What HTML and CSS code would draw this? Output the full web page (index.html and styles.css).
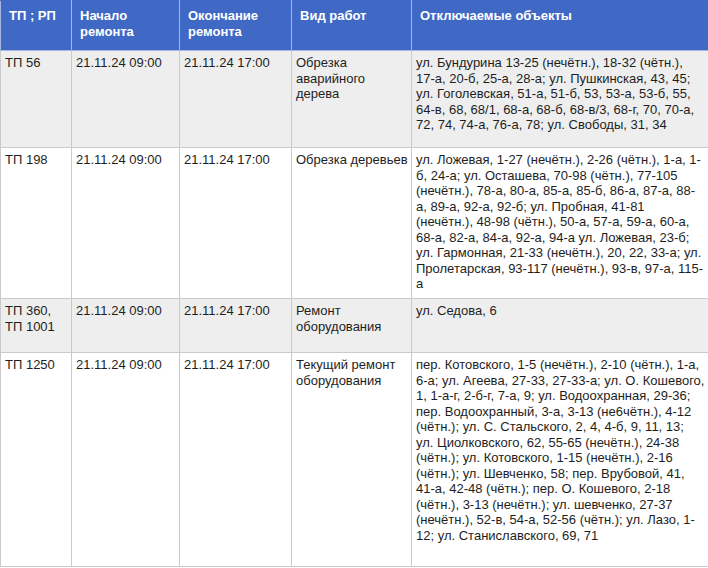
FILE: index.html
```html
<!DOCTYPE html>
<html lang="ru">
<head>
<meta charset="utf-8">
<title>Отключения</title>
<link rel="stylesheet" href="styles.css">
</head>
<body>
<table class="grid">
  <colgroup>
    <col class="c1"><col class="c2"><col class="c3"><col class="c4"><col class="c5">
  </colgroup>
  <thead>
    <tr class="head">
      <th>ТП ; РП</th>
      <th>Начало<br>ремонта</th>
      <th>Окончание<br>ремонта</th>
      <th>Вид работ</th>
      <th>Отключаемые объекты</th>
    </tr>
  </thead>
  <tbody>
    <tr class="r1 alt">
      <td>ТП 56</td>
      <td>21.11.24 09:00</td>
      <td>21.11.24 17:00</td>
      <td>Обрезка<br>аварийного<br>дерева</td>
      <td>ул. Бундурина 13-25 (нечётн.), 18-32 (чётн.),<br>17-а, 20-б, 25-а, 28-а; ул. Пушкинская, 43, 45;<br>ул. Гоголевская, 51-а, 51-б, 53, 53-а, 53-б, 55,<br>64-в, 68, 68/1, 68-а, 68-б, 68-в/3, 68-г, 70, 70-а,<br>72, 74, 74-а, 76-а, 78; ул. Свободы, 31, 34</td>
    </tr>
    <tr class="r2">
      <td>ТП 198</td>
      <td>21.11.24 09:00</td>
      <td>21.11.24 17:00</td>
      <td>Обрезка деревьев</td>
      <td>ул. Ложевая, 1-27 (нечётн.), 2-26 (чётн.), 1-а, 1-<br>б, 24-а; ул. Осташева, 70-98 (чётн.), 77-105<br>(нечётн.), 78-а, 80-а, 85-а, 85-б, 86-а, 87-а, 88-<br>а, 89-а, 92-а, 92-б; ул. Пробная, 41-81<br>(нечётн.), 48-98 (чётн.), 50-а, 57-а, 59-а, 60-а,<br>68-а, 82-а, 84-а, 92-а, 94-а ул. Ложевая, 23-б;<br>ул. Гармонная, 21-33 (нечётн.), 20, 22, 33-а; ул.<br>Пролетарская, 93-117 (нечётн.), 93-в, 97-а, 115-<br>а</td>
    </tr>
    <tr class="r3 alt">
      <td>ТП 360,<br>ТП 1001</td>
      <td>21.11.24 09:00</td>
      <td>21.11.24 17:00</td>
      <td>Ремонт<br>оборудования</td>
      <td>ул. Седова, 6</td>
    </tr>
    <tr class="r4">
      <td>ТП 1250</td>
      <td>21.11.24 09:00</td>
      <td>21.11.24 17:00</td>
      <td>Текущий ремонт<br>оборудования</td>
      <td>пер. Котовского, 1-5 (нечётн.), 2-10 (чётн.), 1-а,<br>6-а; ул. Агеева, 27-33, 27-33-а; ул. О. Кошевого,<br>1, 1-а-г, 2-б-г, 7-а, 9; ул. Водоохранная, 29-36;<br>пер. Водоохранный, 3-а, 3-13 (не6чётн.), 4-12<br>(чётн.); ул. С. Стальского, 2, 4, 4-б, 9, 11, 13;<br>ул. Циолковского, 62, 55-65 (нечётн.), 24-38<br>(чётн.); ул. Котовского, 1-15 (нечётн.), 2-16<br>(чётн.); ул. Шевченко, 58; пер. Врубовой, 41,<br>41-а, 42-48 (чётн.); пер. О. Кошевого, 2-18<br>(чётн.), 3-13 (нечётн.); ул. шевченко, 27-37<br>(нечётн.), 52-в, 54-а, 52-56 (чётн.); ул. Лазо, 1-<br>12; ул. Станиславского, 69, 71</td>
    </tr>
  </tbody>
</table>
</body>
</html>
```

FILE: styles.css
```css
html, body {
  margin: 0;
  padding: 0;
  background: #ffffff;
}

body {
  font-family: "Liberation Sans", Arial, sans-serif;
  font-size: 13px;
  line-height: 15.5px;
  color: #1e1e1e;
}

.grid {
  width: 708px;
  border-collapse: collapse;
  table-layout: fixed;
}

.c1 { width: 71px; }
.c2 { width: 108px; }
.c3 { width: 112px; }
.c4 { width: 120px; }
.c5 { width: 297px; }

.grid th,
.grid td {
  border: 1px solid #cacaca;
  vertical-align: top;
  text-align: left;
  white-space: nowrap;
}

.grid th {
  background: #3f69c5;
  color: #ffffff;
  font-weight: bold;
  padding: 7px 8px 0 8px;
  border-color: #a7b6dc;
  border-top-color: #3f69c5;
}

.grid td {
  padding: 4px 4px 0 4px;
}

.head { height: 50px; }
.r1 { height: 97px; }
.r2 { height: 151px; }
.r3 { height: 54px; }
.r4 { height: 214px; }

.alt td {
  background: #eeeeee;
}
```
